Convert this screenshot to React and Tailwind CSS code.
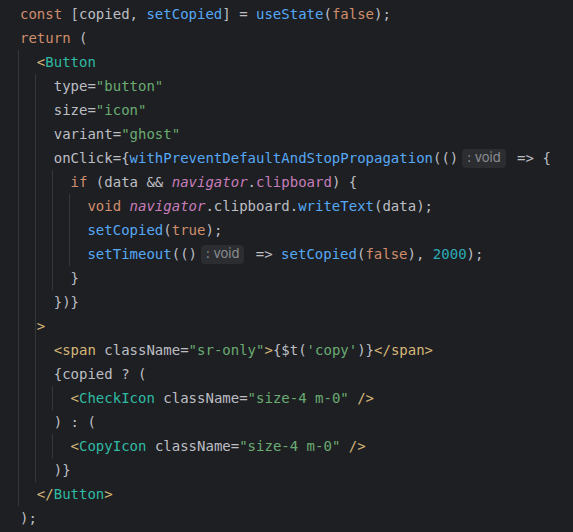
import React from "react";

// token colours (JetBrains dark)
const colors = {
  tx: "text-[#bcbec4]",
  kw: "text-[#cf8e6d]",
  fn: "text-[#56a8f5]",
  str: "text-[#6aab73]",
  num: "text-[#2aacb8]",
  glob: "text-[#c77dbb] italic",
  prop: "text-[#c77dbb]",
  tag: "text-[#d5b778]",
  comp: "text-[#2fbaa3]",
};

const guidePos = ["left-[18px]", "left-[35px]", "left-[52px]", "left-[69px]"];

const lines = [
  { g: [], t: [["kw", "const "], ["tx", "[copied, "], ["fn", "setCopied"], ["tx", "] = "], ["fn", "useState"], ["tx", "("], ["kw", "false"], ["tx", ");"]] },
  { g: [], t: [["kw", "return "], ["tx", "("]] },
  { g: [0], t: [["tx", "  "], ["tag", "<"], ["comp", "Button"]] },
  { g: [0, 1], t: [["tx", "    type="], ["str", '"button"']] },
  { g: [0, 1], t: [["tx", "    size="], ["str", '"icon"']] },
  { g: [0, 1], t: [["tx", "    variant="], ["str", '"ghost"']] },
  { g: [0, 1], t: [["tx", "    onClick={"], ["fn", "withPreventDefaultAndStopPropagation"], ["tx", "(()"], ["hint", ": void"], ["tx", " => {"]] },
  { g: [0, 1, 2], t: [["kw", "      if "], ["tx", "(data && "], ["glob", "navigator"], ["tx", "."], ["prop", "clipboard"], ["tx", ") {"]] },
  { g: [0, 1, 2, 3], t: [["kw", "        void "], ["glob", "navigator"], ["tx", ".clipboard."], ["fn", "writeText"], ["tx", "(data);"]] },
  { g: [0, 1, 2, 3], t: [["tx", "        "], ["fn", "setCopied"], ["tx", "("], ["kw", "true"], ["tx", ");"]] },
  { g: [0, 1, 2, 3], t: [["tx", "        "], ["fn", "setTimeout"], ["tx", "(()"], ["hint", ": void"], ["tx", " => "], ["fn", "setCopied"], ["tx", "("], ["kw", "false"], ["tx", "), "], ["num", "2000"], ["tx", ");"]] },
  { g: [0, 1, 2], t: [["tx", "      }"]] },
  { g: [0, 1], t: [["tx", "    })}"]] },
  { g: [0, 1], t: [["tx", "  "], ["tag", ">"]] },
  { g: [0, 1], t: [["tx", "    "], ["tag", "<span "], ["tx", "className="], ["str", '"sr-only"'], ["tag", ">"], ["tx", "{$t("], ["str", "'copy'"], ["tx", ")}"], ["tag", "</span>"]] },
  { g: [0, 1], t: [["tx", "    {copied ? ("]] },
  { g: [0, 1, 2], t: [["tx", "      "], ["tag", "<"], ["comp", "CheckIcon "], ["tx", "className="], ["str", '"size-4 m-0" '], ["tag", "/>"]] },
  { g: [0, 1], t: [["tx", "    ) : ("]] },
  { g: [0, 1, 2], t: [["tx", "      "], ["tag", "<"], ["comp", "CopyIcon "], ["tx", "className="], ["str", '"size-4 m-0" '], ["tag", "/>"]] },
  { g: [0, 1], t: [["tx", "    )}"]] },
  { g: [0], t: [["tx", "  "], ["tag", "</"], ["comp", "Button"], ["tag", ">"]] },
  { g: [], t: [["tx", ");"]] },
];

const Hint = ({ text }) => (
  <span className="inline-flex items-center h-[19px] ml-[4px] mr-[3px] px-[5px] rounded-[4px] bg-[#2b2d30] text-[#8b8e94] text-[13px] font-['Inter',sans-serif] not-italic">
    {text}
  </span>
);

export default function App() {
  return (
    <div className="w-full h-[532px] overflow-hidden bg-[#1e1f22] pt-[2px] font-['DejaVu_Sans_Mono',monospace] text-[14px]">
      {lines.map((line, i) => (
        <div key={i} className="relative flex items-center h-6 pl-[20px] whitespace-pre">
          {line.g.map((lvl) => (
            <div key={lvl} className={`absolute top-0 bottom-0 w-px bg-[#34363a] ${guidePos[lvl]}`} />
          ))}
          {line.t.map(([type, text], j) =>
            type === "hint" ? (
              <Hint key={j} text={text} />
            ) : (
              <span key={j} className={colors[type]}>
                {text}
              </span>
            )
          )}
        </div>
      ))}
    </div>
  );
}
